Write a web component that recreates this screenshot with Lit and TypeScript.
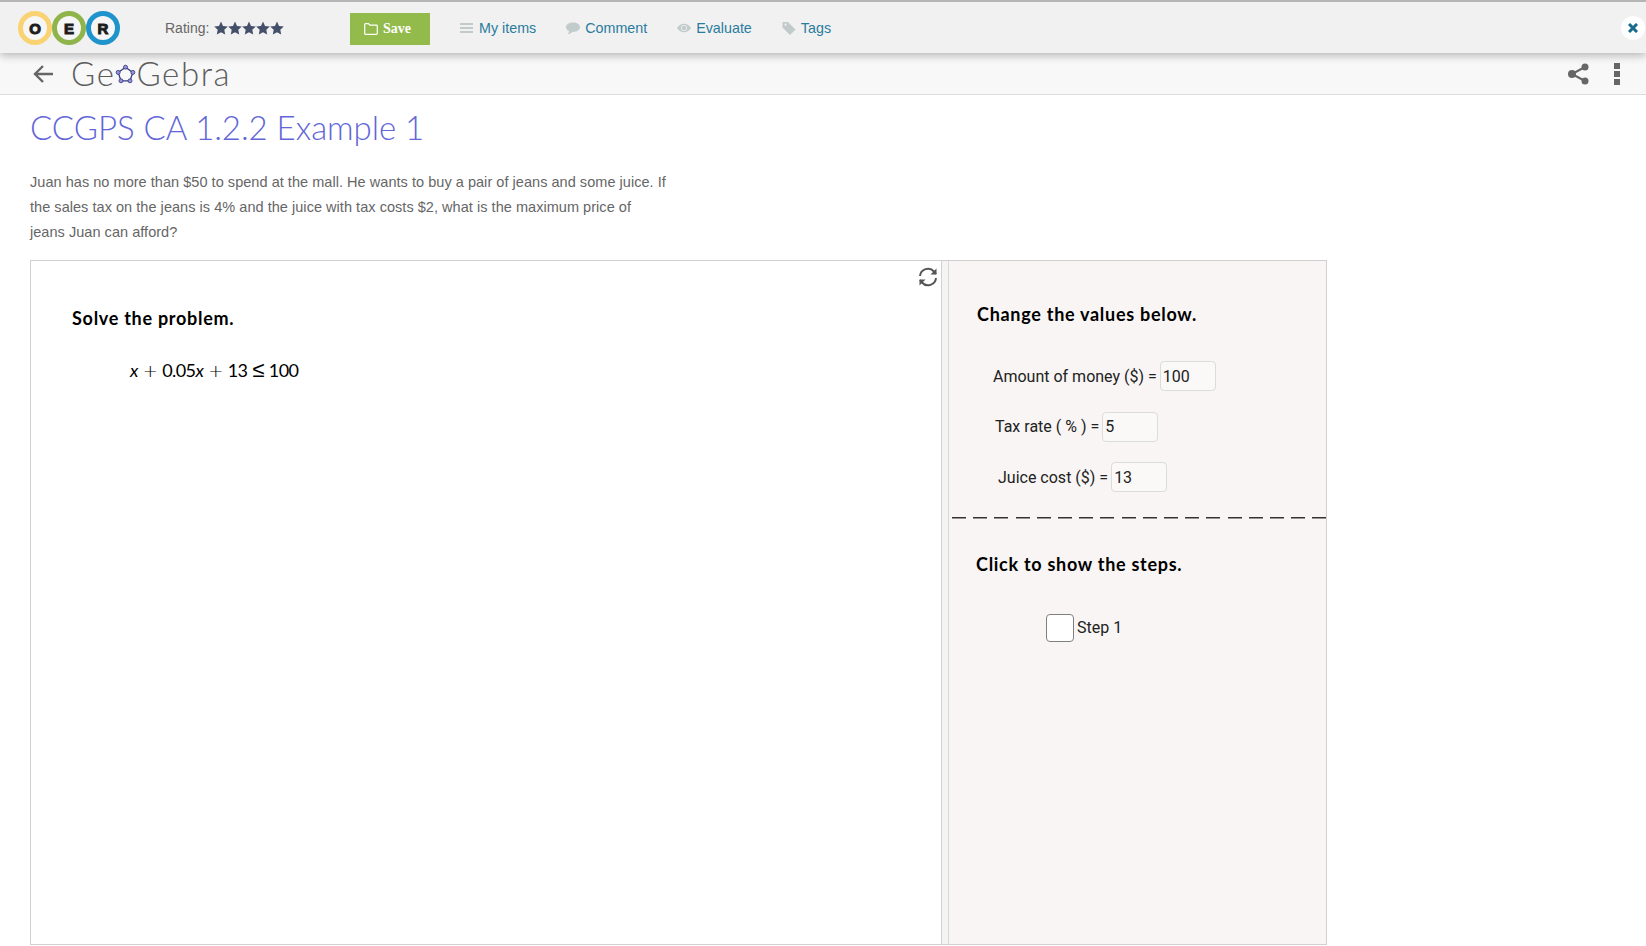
import { LitElement, css, html, svg } from "lit";
import { customElement } from "lit/decorators.js";

const star = svg`<path d="M7 0.5l2 4.4 4.8.6-3.5 3.3.9 4.7L7 11.2 2.8 13.5l.9-4.7L.2 5.5 5 4.9z" />`;

const oerRing = (cx: number, color: string, letter: string) => svg`
  <circle cx=${cx} cy="18" r="14.5" fill="#f6f6f6" stroke=${color} stroke-width="5" />
  <text x=${cx} y="23.5" text-anchor="middle" class="oer-letter">${letter}</text>
`;

@customElement("app-root")
export class AppRoot extends LitElement {
  static styles = css`
    :host {
      display: block;
      height: 946px;
      overflow: hidden;
      background: #fff;
      font-family: "Liberation Sans", Arial, sans-serif;
      color: #333;
    }

    * {
      box-sizing: border-box;
    }

    .oer-bar {
      position: relative;
      z-index: 2;
      display: flex;
      align-items: center;
      height: 53px;
      border-top: 2px solid #b5b5b5;
      background: #f1f1f1;
      box-shadow: 0 2px 9px rgba(0, 0, 0, 0.3);
      font-size: 14px;
    }

    .oer-logo {
      flex: none;
      margin: 1px 0 0 17px;
      width: 104px;
      height: 36px;
    }

    .oer-letter {
      font: 900 15px "Liberation Sans", sans-serif;
      fill: #1c1c1c;
      stroke: #1c1c1c;
      stroke-width: 1px;
    }

    .rating {
      display: flex;
      align-items: center;
      gap: 5px;
      margin-left: 44px;
      width: 185px;
      color: #666;
    }

    .stars {
      display: flex;
      gap: 0;
    }

    .stars svg {
      display: block;
      width: 14px;
      height: 14px;
      fill: #44506a;
    }

    .save {
      display: flex;
      align-items: center;
      justify-content: center;
      gap: 5px;
      width: 80px;
      height: 32px;
      margin-top: 3px;
      padding-right: 5px;
      background: #93bb4b;
      color: #fff;
      font: bold 14px "Liberation Serif", serif;
    }

    .save svg {
      width: 14px;
      height: 12px;
      fill: none;
      stroke: #fff;
      stroke-width: 1.2;
    }

    .links {
      display: flex;
      align-items: center;
      margin-left: 30px;
      font-size: 14.3px;
    }

    .link {
      display: flex;
      align-items: center;
      gap: 5px;
      color: #2a7c9e;
      margin-right: 30px;
    }

    .link svg {
      display: block;
      width: 14px;
      height: 14px;
      fill: #c2cbcb;
    }

    .close {
      position: absolute;
      right: 1px;
      top: 14px;
      display: flex;
      align-items: center;
      justify-content: center;
      width: 24px;
      height: 24px;
      border-radius: 50%;
      background: #fff;
    }

    .close svg {
      width: 10px;
      height: 10px;
      stroke: #1a6a8c;
      stroke-width: 3;
    }

    .gg-bar {
      display: flex;
      align-items: center;
      height: 42px;
      border-bottom: 1px solid #dcdcdc;
      background: #f8f8f8;
      padding: 0 26px 0 32px;
    }

    .back {
      width: 22px;
      height: 20px;
      fill: none;
      stroke: #666;
      stroke-width: 2.4;
    }

    .gg-logo {
      display: flex;
      align-items: center;
      margin: -2px 0 0 17px;
      font: 300 33px Lato, sans-serif;
      color: #5c5c5c;
      letter-spacing: 1.6px;
    }

    .gg-logo svg {
      width: 21px;
      height: 21px;
      margin: 4px 0 0 0;
    }

    .gg-actions {
      display: flex;
      align-items: center;
      gap: 25px;
      margin-left: auto;
    }

    .gg-actions svg {
      display: block;
      fill: #666;
    }

    .share line {
      stroke: #666;
      stroke-width: 2;
    }

    main {
      padding: 0 0 0 30px;
    }

    h1 {
      margin: 0;
      padding-top: 12px;
      height: 75px;
      font: 300 33px/40px Lato, sans-serif;
      color: #6266d8;
      letter-spacing: -0.05px;
    }

    .desc {
      margin: 0 0 15px;
      width: 660px;
      font-size: 14.5px;
      line-height: 25px;
      color: #666;
      letter-spacing: 0.04px;
    }

    .applet {
      display: flex;
      width: 1297px;
      height: 685px;
      border: 1px solid #d0d0d0;
    }

    .graphics {
      position: relative;
      flex: none;
      width: 911px;
      padding: 45px 0 0 41px;
      border-right: 1px solid #d0d0d0;
      color: #000;
    }

    .reset {
      position: absolute;
      top: 4px;
      right: 1px;
      width: 24px;
      height: 24px;
      fill: none;
      stroke: #555;
      stroke-width: 2;
    }

    .splitter {
      flex: none;
      width: 7px;
      border-right: 1px solid #d8d8d8;
      background: #f4f4f4;
    }

    .algebra {
      flex: 1;
      min-width: 0;
      background: #f8f5f4;
      color: #000;
    }

    h2 {
      margin: 0;
      font: 700 18px/24px Lato, sans-serif;
      letter-spacing: 0.72px;
      color: #000;
    }

    .equation {
      display: flex;
      align-items: baseline;
      gap: 5px;
      margin: 28px 0 0 58px;
      font: 400 18px/24px Lato, sans-serif;
      letter-spacing: -0.6px;
    }

    .equation i {
      font-style: italic;
    }

    .equation .op {
      font-family: "DejaVu Sans", sans-serif;
      font-weight: 200;
    }

    .equation .leq {
      font-size: 22px;
      line-height: 20px;
    }

    .values {
      padding: 41px 0 0 28px;
      height: 259px;
      border-bottom: 2px dashed transparent;
      background-image: repeating-linear-gradient(
        90deg,
        #333 0 14px,
        transparent 14px 21.2px
      );
      background-size: 100% 1.5px;
      background-repeat: no-repeat;
      background-position: 3px 100%;
    }

    .field {
      display: flex;
      align-items: center;
      gap: 3px;
      height: 30px;
      margin-top: 20.5px;
      font: 400 16px Roboto, sans-serif;
      color: #222;
    }

    .field:first-of-type {
      margin-top: 35px;
    }

    .field .box {
      display: flex;
      align-items: center;
      width: 56px;
      height: 30px;
      padding-left: 2px;
      border: 1px solid #dcdcdc;
      border-radius: 4px;
      background: #fbf9f8;
    }

    .steps {
      padding: 32px 0 0 27px;
    }

    .step {
      display: flex;
      align-items: center;
      gap: 3px;
      margin: 36px 0 0 70px;
      font: 400 16px Roboto, sans-serif;
      color: #222;
    }

    .check {
      width: 28px;
      height: 28px;
      margin-top: 2px;
      border: 1.5px solid #808080;
      border-radius: 4px;
      background: #fff;
    }
  `;

  private renderField(label: string, value: string, indent: number) {
    return html`
      <div class="field" style="margin-left: ${indent}px">
        <span>${label}</span>
        <span class="box">${value}</span>
      </div>
    `;
  }

  render() {
    return html`
      <header class="oer-bar">
        <svg class="oer-logo" viewBox="0 0 104 36">
          ${oerRing(18, "#f9d272", "O")} ${oerRing(52, "#8fb44a", "E")}
          ${oerRing(86, "#1f93cb", "R")}
        </svg>
        <div class="rating">
          <span>Rating:</span>
          <span class="stars">
            ${[0, 1, 2, 3, 4].map(
              () => html`<svg viewBox="0 0 14 14">${star}</svg>`,
            )}
          </span>
        </div>
        <div class="save">
          <svg viewBox="0 0 14 12">
            <path d="M.7 2.6V1.5q0-.8.8-.8h3l1.2 1.5h6.8q.8 0 .8.8v7.5q0 .8-.8.8H1.5q-.8 0-.8-.8z" />
          </svg>
          Save
        </div>
        <nav class="links">
          <span class="link">
            <svg viewBox="0 0 14 14"><path d="M0 2h13v2H0zM0 6h13v2H0zM0 10h13v2H0z" /></svg>
            My items
          </span>
          <span class="link">
            <svg viewBox="0 0 14 14"><path d="M7 1.500C10.900 1.500 14 3.600 14 6.200S10.900 10.900 7 10.900H6.300C5 12.300 3.300 13 1.500 13c1-.7 1.500-1.600 1.600-2.900C1.200 9.200 0 7.800 0 6.200 0 3.600 3.100 1.500 7 1.500z" /></svg>
            Comment
          </span>
          <span class="link">
            <svg viewBox="0 0 14 14"><path fill-rule="evenodd" d="M0 7C2 3.800 4.500 2.700 7 2.700s5 1.100 7 4.300c-2 3.200-4.500 4.300-7 4.300S2 10.200 0 7zm7-3a3 3 0 1 0 0 6 3 3 0 0 0 0-6z" /><circle cx="7" cy="7" r="2.200" /></svg>
            Evaluate
          </span>
          <span class="link">
            <svg viewBox="0 0 14 14"><path fill-rule="evenodd" d="M.5 1h5.500L13.500 8.500 8 14 .5 6.500zM3.500 2.600a1.100 1.100 0 1 0 0 2.200 1.100 1.100 0 0 0 0-2.200z" /></svg>
            Tags
          </span>
        </nav>
        <span class="close">
          <svg viewBox="0 0 10 10"><path d="M1 1l8 8M9 1l-8 8" /></svg>
        </span>
      </header>

      <div class="gg-bar">
        <svg class="back" viewBox="0 0 22 20">
          <path d="M21 10H3M11 2l-8 8 8 8" />
        </svg>
        <span class="gg-logo">
          Ge<svg viewBox="0 0 20 20">
            <path d="M10 3l7 5-2.700 8H5.700L3 8z" fill="none" stroke="#333a7a" stroke-width="1.200" />
            <g fill="#9c93e0" stroke="#333a7a" stroke-width="0.800">
              <circle cx="10" cy="3" r="1.900" />
              <circle cx="17" cy="8" r="1.900" />
              <circle cx="14.300" cy="16" r="1.900" />
              <circle cx="5.700" cy="16" r="1.900" />
              <circle cx="3" cy="8" r="1.900" />
            </g>
          </svg>Gebra
        </span>
        <div class="gg-actions">
          <svg class="share" width="21" height="22" viewBox="0 0 21 22">
            <line x1="17" y1="4" x2="4" y2="11" />
            <line x1="17" y1="18" x2="4" y2="11" />
            <circle cx="17" cy="4" r="3.500" />
            <circle cx="4" cy="11" r="4" />
            <circle cx="17" cy="18" r="3.500" />
          </svg>
          <svg width="6" height="22" viewBox="0 0 6 22">
            <path d="M0 0h6v6H0zM0 8h6v6H0zM0 16h6v6H0z" />
          </svg>
        </div>
      </div>

      <main>
        <h1>CCGPS CA 1.2.2 Example 1</h1>
        <p class="desc">
          Juan has no more than $50 to spend at the mall. He wants to buy a pair
          of jeans and some juice. If<br />the sales tax on the jeans is 4% and
          the juice with tax costs $2, what is the maximum price of<br />jeans
          Juan can afford?
        </p>
        <section class="applet">
          <div class="graphics">
            <svg class="reset" viewBox="0 0 24 24">
              <path d="M4 11a8 8 0 0 1 14-4.500L20 9" />
              <path d="M20 13a8 8 0 0 1-14 4.500L4 15" />
              <path d="M20.500 3.500V9.500H14.500z" fill="#555" stroke="none" />
              <path d="M3.500 20.500V14.500H9.500z" fill="#555" stroke="none" />
            </svg>
            <h2>Solve the problem.</h2>
            <div class="equation">
              <i>x</i><span class="op">+</span><span>0.05<i>x</i></span
              ><span class="op">+</span><span>13</span
              ><span class="op leq">≤</span><span>100</span>
            </div>
          </div>
          <div class="splitter"></div>
          <div class="algebra">
            <div class="values">
              <h2>Change the values below.</h2>
              ${this.renderField("Amount of money ($) =", "100", 16)}
              ${this.renderField("Tax rate ( % ) =", "5", 18)}
              ${this.renderField("Juice cost ($) =", "13", 21)}
            </div>
            <div class="steps">
              <h2>Click to show the steps.</h2>
              <div class="step">
                <span class="check"></span>
                <span>Step 1</span>
              </div>
            </div>
          </div>
        </section>
      </main>
    `;
  }
}
